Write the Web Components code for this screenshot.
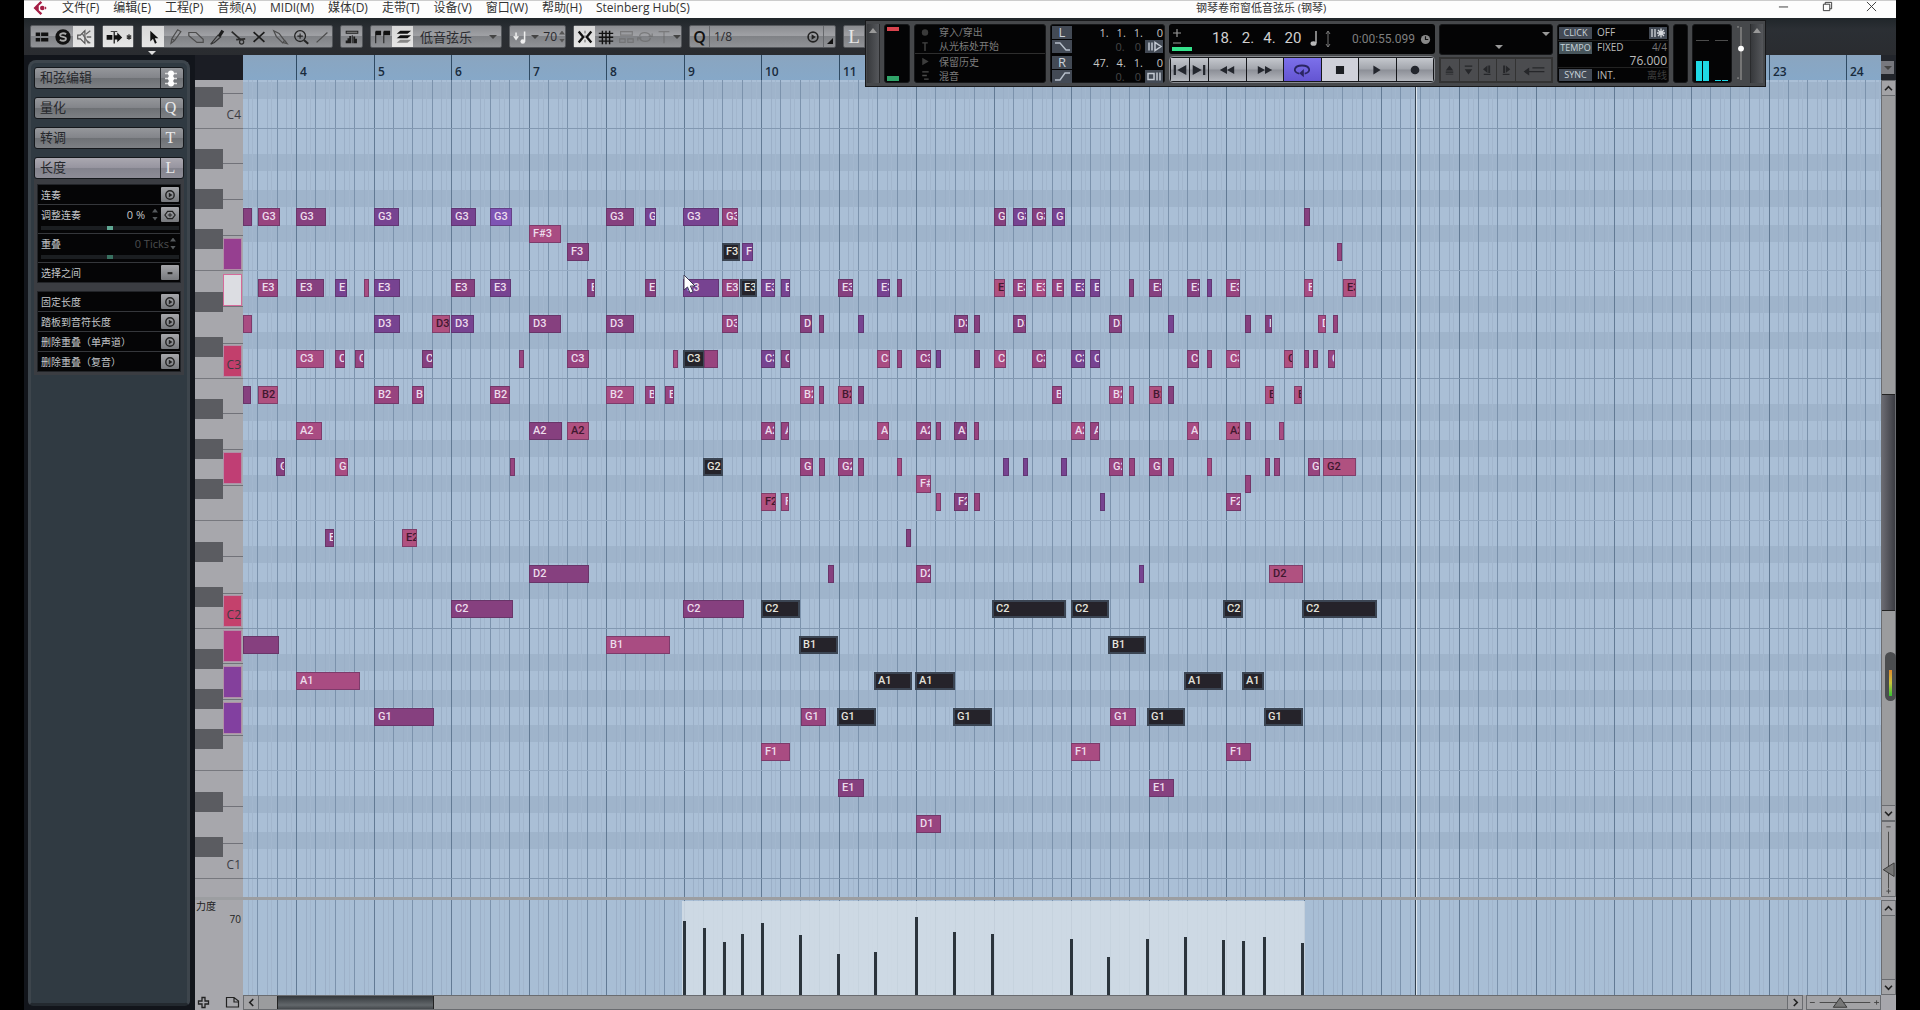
<!DOCTYPE html>
<html lang="zh-CN">
<head>
<meta charset="utf-8">
<title>钢琴卷帘窗</title>
<style>
html,body{margin:0;height:100%;background:#000;overflow:hidden}
body{font-family:"Open Sans","Noto Sans CJK SC",sans-serif;font-size:12px}
</style>
</head>
<body>
<key-editor></key-editor>
<script>
const BASE = `*{box-sizing:border-box}button,input,select{font:inherit;color:inherit;margin:0;padding:0;border:0;background:none;border-radius:0;outline:0}svg{display:block}`;
const define = (name, css, html) => customElements.define(name, class extends HTMLElement {
  constructor() { super(); this.attachShadow({mode: 'open'}); }
  connectedCallback() {
    if (this.shadowRoot.firstChild) return;
    this.shadowRoot.innerHTML = `<style>${BASE}${css}</style>` + (typeof html === 'function' ? html(this) : html);
  }
});

/* ---------- icons ---------- */
const ICONS = {
  layout: ['0 0 20 20', '<path d="M3 5h5v4H3zM3 11h5v4H3zM9 5h8v4H9zM9 11h8v4H9z" fill="#111"/>'],
  solo: ['0 0 20 20', '<circle cx="10" cy="10" r="8.5" fill="#111"/><path d="M13.500 7C11 5 6.500 5.800 6.800 8.200 7.200 10.500 13.300 9.500 13.300 12 13.200 14.600 9 14.800 6.500 13" fill="none" stroke="#aaa" stroke-width="2"/>'],
  feedback: ['0 0 20 20', '<path d="M3 8h3l5-5v14l-5-5H3z" fill="none" stroke="#555" stroke-width="1.300"/><path d="M12 7l5-4M13 10h5M12 13l5 4M8 6l7 11" stroke="#666" stroke-width="1.400"/>'],
  autoscroll: ['0 0 22 20', '<path d="M2 7.500h7v6H2zM12 8h3V4.500l6 6-6 6V13h-3zM10.500 3h1.500v15h-1.500zM7 3h8v1H7z" fill="#111"/>'],
  star: ['0 0 8 20', '<path d="M4 7v6M1.500 8.500l5 3M6.500 8.500l-5 3" stroke="#333" stroke-width="1.400"/>'],
  arrow: ['0 0 20 20', '<path d="M7 3v12l3-3 2.200 5.500 2-1-2.200-5h4z" fill="#111"/>'],
  pencil: ['0 0 20 20', '<path d="M5.500 17l1-5 6.500-10 3.500 2-7 10zM6.500 12l3 2" fill="none" stroke="#4c4c4c" stroke-width="1.300"/>'],
  eraser: ['0 0 20 20', '<path d="M2 5h8l8 7.500V16h-7L2 8.500z" fill="none" stroke="#4c4c4c" stroke-width="1.300"/>'],
  trim: ['0 0 20 20', '<path d="M3 18l8-10 3 2-7 6z" fill="none" stroke="#333" stroke-width="1.300"/><path d="M11 8l4-6 3 2-4 6z" fill="#1c1c1c"/>'],
  scissors: ['0 0 20 20', '<path d="M3 4l10 9M8 13l10-1" stroke="#2c2c2c" stroke-width="1.900"/><circle cx="14" cy="15.500" r="2.300" fill="none" stroke="#2c2c2c" stroke-width="1.400"/>'],
  mute: ['0 0 20 20', '<path d="M4 4.500l12 11M16 4.500l-12 11" stroke="#1c1c1c" stroke-width="1.900"/>'],
  glue: ['0 0 20 20', '<path d="M3 3l6 3 6 8-2 2.500-7-7zM13 16l5 1.500-3-4" fill="none" stroke="#4c4c4c" stroke-width="1.300"/>'],
  zoom: ['0 0 20 20', '<circle cx="9" cy="9" r="6" fill="none" stroke="#222" stroke-width="1.400"/><path d="M13.500 13.500l4.500 4" stroke="#222" stroke-width="2.200"/><path d="M6 9h6M9 6v6" stroke="#222" stroke-width="1.200"/>'],
  line: ['0 0 20 20', '<path d="M4 16L16 5" stroke="#4c4c4c" stroke-width="1.400"/>'],
  velocity: ['0 0 20 20', '<path d="M3 3h14v3.500H3zM3 17v-3h2v-2.500h2V9h2v8h.800V8h1v9h.700V9.500h2V12h2v5z" fill="#1c1c1c"/><path d="M4 4.700h12" stroke="#999"/>'],
  edit: ['0 0 20 20', '<path d="M3 17V4M12 17V4" stroke="#222" stroke-width="1.200"/><path d="M3 3h6v5H3zM12 3h7v5h-7z" fill="#111"/>'],
  layers: ['0 0 20 20', '<path d="M7 3h12l-4 3.500H3zM7 8h12l-4 3.500H3z" fill="#111"/><path d="M7 13h12l-4 3.500H3z" fill="#888"/>'],
  insertNote: ['0 0 20 20', '<path d="M4.500 5v7M2 9l2.500 3.500L7 9M14 4v11" stroke="#eee" stroke-width="1.700" fill="none"/><circle cx="12" cy="15" r="2.600" fill="#eee"/>'],
  snap: ['0 0 20 20', '<path d="M3 4l5 6-5 6M17 4l-5 6 5 6" fill="none" stroke="#111" stroke-width="2.600"/><path d="M10 3v14" stroke="#555" stroke-dasharray="3 2"/>'],
  grid: ['0 0 20 20', '<path d="M2 6h16M2 10.300h16M2 14.600h16M6 3v15M10 3v15M14 3v15" stroke="#111" stroke-width="1.600"/>'],
  gridType: ['0 0 20 20', '<path d="M4 4h13v4H4zM3 12h6v4H3zM12 12h6v4h-6z" fill="none" stroke="#666" stroke-width="1.300"/>'],
  loop: ['0 0 20 20', '<path d="M4 9c1-5 10-5 12 0M16 11c-1 5-10 5-12 0M14 9h4V6M6 11H2v3" fill="none" stroke="#666" stroke-width="1.400"/>'],
  tee: ['0 0 20 20', '<path d="M4 4h12M10 4v13" stroke="#666" stroke-width="1.300"/>'],
  play: ['0 0 20 20', '<circle cx="10" cy="10" r="7" fill="none" stroke="#222" stroke-width="2.300"/><path d="M8 6l6 4-6 4z" fill="#222"/>'],
  dot: ['0 0 20 20', '<rect x="6" y="8.500" width="8" height="3.500" fill="#222"/>'],
  gem: ['0 0 20 20', '<path d="M1.500 10L6 4h8l4.500 6L14 16H6z" fill="none" stroke="#222" stroke-width="2"/><path d="M10 6.500v7M6.500 10h7" stroke="#222" stroke-width="1.600"/>'],
  chord: ['0 0 14 20', '<path d="M1 5.500h12M1 10.500h12M1 15.500h12" stroke="#ddd" stroke-width="1.400"/><g fill="#fff"><circle cx="7" cy="5.500" r="3"/><circle cx="7" cy="10.500" r="3"/><circle cx="7" cy="15.500" r="3"/></g>'],
  toStart: ['0 0 20 20', '<path d="M3 4.500h2.500v11H3zM17 4.500v11L7 10z" fill="#23262d"/>'],
  toEnd: ['0 0 20 20', '<path d="M14.500 4.500H17v11h-2.500zM3 4.500v11L13 10z" fill="#23262d"/>'],
  rewind: ['0 0 20 20', '<path d="M10 5.500v9L2 10zM18 5.500v9L10 10z" fill="#23262d"/>'],
  forward: ['0 0 20 20', '<path d="M10 5.500v9l8-4.500zM2 5.500v9l8-4.500z" fill="#23262d"/>'],
  cycle: ['0 0 20 20', '<path d="M7 14C-1 12.500 1 5 10 5s11 7.500 3 9" fill="none" stroke="#2a2563" stroke-width="2"/><path d="M12 9v9l-5-4.500z" fill="#2a2563"/>'],
  stop: ['0 0 20 20', '<path d="M5.500 5.500h9v9h-9z" fill="#1d1f24"/>'],
  playT: ['0 0 20 20', '<path d="M6 5v10l8-5z" fill="#23262d"/>'],
  rec: ['0 0 20 20', '<circle cx="10" cy="10" r="4.800" fill="#23262d"/>'],
  nUp: ['0 0 20 20', '<path d="M10 4l5 6.500H5zM5 12h10v1.500H5zM5 15h10v1H5z" fill="#26272a"/>'],
  nDown: ['0 0 20 20', '<path d="M10 16l5-7H5zM5 4h10v1.500H5z" fill="#26272a"/>'],
  nLeft: ['0 0 20 20', '<path d="M4 9l6-5v10zM11 4h2.500v10H11zM5 15h9v1.500H5z" fill="#26272a"/>'],
  nRight: ['0 0 20 20', '<path d="M15 9L9 4v10zM5.500 4H8v10H5.500zM5 15h9v1.500H5z" fill="#26272a"/>'],
  nEnter: ['0 0 28 20', '<path d="M1 12l7-5v10zM8 11.200h19v1.700H8zM12 6.500h15v1.700H12z" fill="#26272a"/>'],
  chevUp: ['0 0 15 15', '<path d="M3.500 9.500l4-4 4 4" fill="none" stroke="#222" stroke-width="1.900"/>'],
  chevDown: ['0 0 15 15', '<path d="M3.500 5.500l4 4 4-4" fill="none" stroke="#222" stroke-width="1.900"/>'],
  chevLeft: ['0 0 15 15', '<path d="M9.500 3.500l-4 4 4 4" fill="none" stroke="#222" stroke-width="1.900"/>'],
  chevRight: ['0 0 15 15', '<path d="M5.500 3.500l4 4-4 4" fill="none" stroke="#222" stroke-width="1.900"/>'],
  plus: ['0 0 15 15', '<path d="M6 2.500h3V6h3.500v3H9v3.500H6V9H2.500V6H6z" fill="none" stroke="#222" stroke-width="1.300"/>'],
  page: ['0 0 15 15', '<path d="M1.500 2.500H9l4.500 3.500v6h-12zM9 2.500V7h4" fill="none" stroke="#222" stroke-width="1.200"/>'],
  min: ['0 0 12 12', '<path d="M1 6.500h10" stroke="#333"/>'],
  restore: ['0 0 12 12', '<path d="M1.500 3.500h7v7h-7zM3.500 3.500v-2h7v7h-2" fill="none" stroke="#333"/>'],
  close: ['0 0 12 12', '<path d="M1 1l10 10M11 1L1 11" stroke="#333"/>'],
  logo: ['0 0 16 16', '<path d="M8 0L0 8l8 8 2-2-4-3.500v-5L10 2z" fill="#a51e45"/><circle cx="10" cy="8" r="2.600" fill="#a51e45"/><path d="M13 6l2 2-2 2z" fill="#a51e45"/>'],
  inL: ['0 0 20 13', '<path d="M3 3h5l6 7h4" fill="none" stroke="#b7bfca" stroke-width="1.400"/>'],
  inR: ['0 0 20 13', '<path d="M3 10h5l5-7h5" fill="none" stroke="#b7bfca" stroke-width="1.400"/>'],
  preroll: ['0 0 18 13', '<path d="M4 2.500v8M7 2.500v8M10 2.500v8l6-4z" fill="none" stroke="#c3c9d2" stroke-width="1.500"/>'],
  postroll: ['0 0 18 13', '<path d="M3 3.500h6v6H3zM12 2.500v8M15 2.500v8" fill="none" stroke="#c3c9d2" stroke-width="1.500"/>'],
  clickIc: ['0 0 18 12', '<path d="M3 2v8M6 2v8M12 1.500v9M8 6h8M9 3l6 6M15 3L9 9" stroke="#d5d8dd" stroke-width="1.300"/>'],
  punch: ['0 0 10 12', '<circle cx="5" cy="6" r="3.500" fill="#3a3a3a"/>'],
  fromCursor: ['0 0 10 12', '<path d="M2 2h6M5 2v9" stroke="#444" stroke-width="1.500"/>'],
  history: ['0 0 10 12', '<path d="M2 2v8l7-4z" fill="#3c3c3c"/>'],
  mix: ['0 0 10 12', '<path d="M2 2h7M2 6h5M4 10h5" stroke="#4c4c4c" stroke-width="1.500"/>'],
  quarter: ['0 0 10 20', '<path d="M8 3v12" stroke="#b8b8b8" stroke-width="1.400"/><ellipse cx="5.500" cy="15.500" rx="3" ry="2.300" fill="#b8b8b8"/>'],
  range: ['0 0 6 20', '<path d="M3 2v16M1 5l2-3 2 3M1 15l2 3 2-3" stroke="#777" fill="none"/>'],
  clock: ['0 0 12 12', '<circle cx="6" cy="6" r="5" fill="#888"/><path d="M6 2.500V6h3" stroke="#111" fill="none" stroke-width="1.300"/>'],
  nudge: ['0 0 20 28', '<path d="M1 8h8M5 4v8M1 18h8" stroke="#999" stroke-width="1.200"/><path d="M0 22h20v4H0z" fill="#35e28c"/>'],
  pointer: ['0 0 14 20', '<path d="M1 1v15l3.500-3 2.500 6 3-1.200-2.600-5.800H12z" fill="#fff" stroke="#3a3a55" stroke-width="1"/>']
};
define('ui-icon', ':host{display:block;flex:none;width:20px;height:20px}svg{width:100%;height:100%}',
  el => { const [vb, body] = ICONS[el.getAttribute('name')]; return `<svg viewBox="${vb}" aria-hidden="true">${body}</svg>`; });

define('small-arrow', `:host{display:block;flex:none;border:4px solid transparent;border-bottom-width:0;border-top-color:var(--c,#444);width:0;height:0}
  :host([up]){border-bottom-width:5px;border-top-width:0;border-bottom-color:var(--c,#444)}`, '');

define('spin-arrows', `:host{display:flex;flex-direction:column;gap:4px;flex:none}
  i{width:6px;height:4px;background:var(--c,#555)}.u{clip-path:polygon(50% 0,100% 100%,0 100%)}.d{clip-path:polygon(0 0,100% 0,50% 100%)}`, '<i class="u"></i><i class="d"></i>');

/* ---------- menu bar ---------- */
define('menu-bar', `:host{display:flex;align-items:flex-start;height:18px;background:#fdfdfd;border-top:1px solid #ccc;color:#333;font-size:12px;line-height:14px;position:relative}
  nav{display:flex;gap:14px;padding-left:14px}button{line-height:14px;white-space:nowrap}
  ui-icon.logo{width:15px;height:14px;margin-left:9px}
  h1{position:absolute;left:1172px;top:-1px;margin:0;font-weight:400;font-size:11px;line-height:16px;white-space:nowrap}
  .win{margin-left:auto;display:flex;gap:33px;padding-right:19px}.win ui-icon{width:11px;height:11px}`,
  `<ui-icon class="logo" name="logo"></ui-icon><nav>${['文件(F)','编辑(E)','工程(P)','音频(A)','MIDI(M)','媒体(D)','走带(T)','设备(V)','窗口(W)','帮助(H)','Steinberg Hub(S)'].map(t => `<button>${t}</button>`).join('')}</nav>
  <h1>钢琴卷帘窗低音弦乐 (钢琴)</h1>
  <div class="win"><button aria-label="最小化"><ui-icon name="min"></ui-icon></button><button aria-label="还原"><ui-icon name="restore"></ui-icon></button><button aria-label="关闭"><ui-icon name="close"></ui-icon></button></div>`);

/* ---------- tool bar ---------- */
define('tool-group', `:host{display:flex;align-items:stretch;height:23px;background:linear-gradient(#8a8c90,#a0a1a5 45%,#808286 50%,#909296);border:1px solid #55585c;border-radius:2px;color:#2a2a2e;flex:none;position:relative}`, '<slot></slot>');
define('tool-button', `:host{display:flex}button{display:flex;align-items:center;justify-content:center;width:var(--w,21px);height:21px}
  ui-icon{width:var(--iw,18px);height:18px}:host([on]) button{background:linear-gradient(#d8d8d8,#e6e6e6)}`,
  el => `<button aria-label="${el.getAttribute('icon')}"><ui-icon name="${el.getAttribute('icon')}"></ui-icon></button>`);

const tb = (icon, on = '') => `<tool-button icon="${icon}" ${on}></tool-button>`;
define('tool-bar', `:host{display:flex;align-items:flex-start;gap:7px;height:37px;padding:7px 0 0 6px;background:linear-gradient(#20262a,#2b2f34 30%,#2a2c30);overflow:hidden}
  select{appearance:none;font-size:13px;line-height:20px;padding-left:7px}
  .pick{display:flex;align-items:center}
  .pick.name{padding-right:4px}.pick.name select{width:76px}.pick.q select{width:93px;font-size:12px;padding-left:4px}
  .len{display:flex;align-items:center;gap:2px;padding-right:2px}input{width:16px;font-size:12px;text-align:right}
  .mid{align-self:center}.faint{opacity:.6}.cell{display:flex;align-items:center;border-right:1px solid #66686c}
  .qq{width:20px;font-size:16px;font-weight:600;justify-content:center;color:#111}
  .corner{width:11px;position:relative}.corner:after{content:"";position:absolute;right:2px;bottom:3px;border:3px solid transparent;border-right-color:#111;border-bottom-color:#111}
  .L{font-family:"Liberation Serif",serif;font-size:19px;color:#e6e6e6;width:21px;justify-content:center}
  .mark{position:absolute;left:6px;top:25px;--c:#ddd}`,
  `<tool-group>${tb('layout')}${tb('solo')}${tb('feedback','on')}</tool-group>
  <tool-group>${tb('autoscroll','on')}<tool-button icon="star" on style="--w:9px;--iw:8px"></tool-button></tool-group>
  <tool-group>${tb('arrow','on style="--w:22px"')}${['pencil','eraser','trim','scissors','mute','glue','zoom','line'].map(n => tb(n)).join('')}<small-arrow class="mark"></small-arrow></tool-group>
  <tool-group>${tb('velocity')}</tool-group>
  <tool-group>${tb('edit')}${tb('layers','on')}<span class="pick name"><select aria-label="片段"><option>低音弦乐</option></select><small-arrow></small-arrow></span></tool-group>
  <tool-group>${tb('insertNote')}<span class="len"><small-arrow></small-arrow><input aria-label="插入力度" value="70"></span><spin-arrows class="mid"></spin-arrows></tool-group>
  <tool-group>${tb('snap','on')}${tb('grid')}${['gridType','loop','tee'].map(n => `<tool-button class="faint" icon="${n}" style="--w:19px"></tool-button>`).join('')}<small-arrow class="mid"></small-arrow></tool-group>
  <tool-group><span class="cell qq">Q</span><span class="pick q"><select aria-label="量化"><option>1/8</option></select></span><tool-button class="cell" icon="play" style="--w:20px;--iw:14px"></tool-button><span class="corner"></span></tool-group>
  <tool-group><span class="cell L">L</span>${tb('tee')}</tool-group>`);

/* ---------- inspector ---------- */
define('section-head', `:host{display:block}button{display:flex;width:100%;height:22px;align-items:stretch;text-align:left;border:1px solid #15181c;border-radius:3px;background:linear-gradient(#95979b,#83858a 48%,#6e7175 52%,#7d8084);color:#26282c;font-size:13px;line-height:18px}
  :host([open]) button{background:linear-gradient(#aaa8b0,#9795a0 48%,#83838d 52%,#8d8c96)}
  span{flex:1;padding-left:5px}b{width:23px;border-left:1px solid #2b2d31;font:16px/20px "Liberation Serif",serif;color:#e9e9e9;display:flex;justify-content:center;padding-right:3px}
  ui-icon{width:14px;height:20px}`,
  el => `<button><span>${el.getAttribute('label')}</span><b>${el.hasAttribute('icon') ? '<ui-icon name="chord"></ui-icon>' : el.getAttribute('mark')}</b></button>`);

define('function-row', `:host{display:block;background:#050506;color:#c4c7ca;font-size:10px;line-height:14px;height:19px;padding:1px 1px 0 3px}
  :host([slider]){height:28px}
  .r{display:flex;align-items:center;height:17px}.r label,.r span{flex:1;white-space:nowrap}
  button{width:18px;height:15px;background:linear-gradient(#a5a6aa,#77797d);border-radius:1px;display:flex;align-items:center;justify-content:center}
  ui-icon{width:12px;height:12px}output{font-size:11px;margin-right:7px}:host([dim]) output{color:#4c4e50;margin-right:1px}
  spin-arrows{margin-right:3px;--c:#55595c}
  input{appearance:none;display:block;width:100%;height:6px;margin-top:2px;background:linear-gradient(transparent 1px,#1b1e21 1px,#1b1e21 5px,transparent 5px)}
  input::-webkit-slider-thumb{appearance:none;width:6px;height:4px;background:#5fa893}:host([dim]) input::-webkit-slider-thumb{background:#38705f}`,
  el => { const a = n => el.getAttribute(n); return `<div class="r">${el.hasAttribute('slider') ? `<label for="s">${a('label')}</label>` : `<span>${a('label')}</span>`}${a('value') ? `<output>${a('value')}</output><spin-arrows></spin-arrows>` : ''}${a('icon') ? `<button aria-label="${a('label')}"><ui-icon name="${a('icon')}"></ui-icon></button>` : ''}</div>${el.hasAttribute('slider') ? '<input id="s" type="range">' : ''}`; });

define('inspector-panel', `:host{display:block;width:171px;flex:none;background:#12151b;padding:5px 5px 4px 4px}
  .p{height:100%;background:#303a42;border:3px solid #3d454c;border-bottom-color:#23292f;border-radius:8px 8px 5px 5px;padding:4px 3px}
  .heads{display:grid;gap:8px}.rows{display:grid;gap:1px;margin:0 3px;border:1px solid #222428;background:#35373b}
  .body{background:#3b3d42;padding:5px 0 3px}.rows+.rows{margin-top:8px}`,
  `<div class="p"><div class="heads"><section-head label="和弦编辑" icon></section-head><section-head label="量化" mark="Q"></section-head><section-head label="转调" mark="T"></section-head><section-head label="长度" mark="L" open></section-head></div>
  <div class="body"><div class="rows"><function-row label="连奏" icon="play"></function-row><function-row label="调整连奏" value="0 %" slider icon="gem"></function-row><function-row label="重叠" value="0 Ticks" slider dim></function-row><function-row label="选择之间" icon="dot"></function-row></div>
  <div class="rows"><function-row label="固定长度" icon="play"></function-row><function-row label="踏板到音符长度" icon="play"></function-row><function-row label="删除重叠（单声道）" icon="play"></function-row><function-row label="删除重叠（复音）" icon="play"></function-row></div></div></div>`);

/* ---------- musical geometry ---------- */
const BAR = 77.5, BAR4 = 53, OCT = 250, OCT3_TOP = 48;
const ROW = {B:8,'A#':26,A:44,'G#':62,G:80,'F#':97,F:115,E:151,'D#':168,D:187,'C#':204,C:222};
const rowY = p => OCT3_TOP + (3 - +p.slice(-1)) * OCT + ROW[p.slice(0, -1)];
const beatLines = h => {
  let s = '';
  for (let i = -6; i < 400; i++) {
    const x = Math.round(BAR4 + i * BAR / 8) + .5, kind = i % 8 === 0 ? '#627a94' : i % 2 === 0 ? '#7b92ac' : '#9bafc7';
    s += `<path d="M${x} 0V${h}" stroke="${kind}"/>`;
    if (i % 2 === 0) s += `<path d="M${x + 14} 0V${h}" stroke="#a2b6cd"/>`;
  }
  return s;
};

define('time-ruler', `:host{display:block;position:relative;background:linear-gradient(#8aa5c0,#86a8c8);overflow:hidden}svg{width:100%;height:100%}text{font:600 12px "Open Sans",sans-serif;fill:#182a3c}`,
  () => { let s = ''; for (let n = 4; n < 50; n++) s += `<path d="M${Math.round(BAR4 + (n - 4) * BAR) + .5} 0V25" stroke="#2f4a63"/>`;
    for (const n of [4,5,6,7,8,9,10,11,23,24]) s += `<text x="${Math.round(BAR4 + (n - 4) * BAR) + 4}" y="21">${n}</text>`;
    return `<svg>${s}</svg>`; });

define('piano-keys', `:host{display:block;background:#a7a7ac;overflow:hidden}svg{width:100%;height:100%}text{font:12px "Open Sans",sans-serif;fill:#3c3c44;text-anchor:end}`,
  () => {
    let s = '';
    const tops = {B:2,A:38,G:74,F:110,E:146,D:181,C:217};
    for (const [p, c] of [['F3','#963f90'],['E3','#dcdde2'],['C3','#c23f6c'],['G2','#c03e74'],['C2','#c4416c'],['B1','#b03c80'],['A1','#84409c'],['G1','#8240a0']]) {
      const y = OCT3_TOP + (3 - p[1]) * OCT + tops[p[0]];
      s += `<rect x="28.500" y="${y + .5}" width="18" height="31" fill="${c}" stroke="${p === 'E3' ? '#d46a9a' : '#b08fa6'}"/>`;
    }
    for (let o = 4; o >= 0; o--) {
      const T = OCT3_TOP + (3 - o) * OCT;
      for (const d of [35,71,107,178,215]) s += `<path d="M27 ${T + d}.5h21" stroke="#717279"/>`;
      for (const d of [0,142]) s += `<path d="M0 ${T + d}.5h48" stroke="#77787e"/>`;
      for (const d of [21,61,101,164,209]) s += `<rect y="${T + d}" width="28" height="20" fill="#5b5c61"/>`;
      if (o) s += `<text x="46" y="${T + 241}">C${o}</text>`;
    }
    return `<svg>${s}</svg>`;
  });

define('midi-note', `:host{position:absolute;height:18px;overflow:hidden;border:1px solid rgba(70,40,80,.45);padding-left:3px;font:500 11px/16px Roboto,sans-serif;white-space:nowrap;color:#ecdcec;background:#86407f}
  :host([tone=v]){background:#774391}:host([tone=l]){background:#7e54b4}:host([tone=m]){background:#98447f}:host([tone=k]){background:#a94c82}
  :host([tone=d]){background:#b05180;color:#40182f}
  :host([tone=s]){background:#25232a;border:2px solid #3b4553;color:#e4e2dc;line-height:14px;padding-left:2px}`, '<slot></slot>');

/* start, end and tone of every note, by pitch */
const NOTES = {
 G3:'243 252 p,258 280 m,296 326 p,374 399 v,451 476 v,490 512 l,606 634 p,645 656 v,683 719 v,722 738 m,994 1006 p,1013 1027 v,1032 1046 p,1052 1065 v,1304 1310 p',
 'F#3':'529 561 k', F3:'567 589 p,722 740 s,742 753 v,1337 1342 m',
 E3:'258 278 m,296 324 p,335 347 v,364 368 k,374 400 v,451 475 p,490 511 v,587 595 p,645 656 p,683 719 v,722 739 m,740 757 s,761 775 v,781 790 v,838 853 p,877 890 v,897 901 p,994 1005 d,1013 1026 m,1032 1046 k,1052 1064 m,1071 1085 v,1090 1100 v,1129 1134 p,1149 1162 p,1187 1200 p,1207 1210 v,1226 1240 m,1304 1313 k,1343 1356 d',
 D3:'243 252 k,374 400 v,432 450 d,451 474 v,529 561 p,606 634 p,722 738 m,800 812 p,819 824 p,858 864 v,954 968 p,974 980 p,1013 1026 p,1109 1122 p,1168 1174 v,1245 1251 p,1265 1272 p,1318 1326 k,1333 1337 m',
 C3:'296 324 k,335 345 m,355 364 m,422 433 p,519 524 m,567 589 m,673 677 k,683 705 s,704 718 m,761 775 v,781 790 p,877 890 k,897 901 m,916 931 m,936 941 v,974 980 p,994 1006 k,1032 1046 m,1071 1085 v,1090 1100 v,1187 1199 m,1207 1211 m,1226 1240 k,1284 1293 d,1304 1308 m,1313 1316 m,1328 1335 m',
 B2:'243 251 p,258 278 d,374 399 m,412 424 m,490 510 m,606 634 k,645 655 m,665 674 m,800 814 k,819 824 m,838 852 d,858 864 p,1052 1062 m,1109 1123 k,1129 1134 k,1149 1162 d,1168 1174 p,1265 1274 d,1294 1302 d',
 A2:'296 322 k,529 562 p,567 589 d,761 775 m,781 789 m,877 889 k,916 931 m,936 941 m,954 967 p,974 979 m,1071 1085 k,1090 1099 m,1187 1199 k,1226 1240 d,1245 1251 m,1279 1284 k',
 G2:'276 285 p,335 348 k,510 514 m,703 723 s,800 813 m,819 825 m,838 853 m,858 864 m,897 901 k,1003 1009 v,1023 1028 v,1061 1067 v,1109 1123 m,1129 1135 m,1149 1162 m,1168 1174 m,1207 1211 k,1265 1269 m,1274 1280 m,1308 1320 m,1323 1356 d',
 'F#2':'916 931 k,1245 1251 m', F2:'761 776 d,781 789 k,936 940 k,954 968 p,974 980 m,1100 1105 v,1226 1241 m',
 E2:'325 334 p,402 417 d,906 911 p', D2:'529 589 p,828 834 p,916 931 m,1139 1144 v,1269 1303 d',
 C2:'451 513 p,683 744 p,761 800 s,992 1066 s,1071 1109 s,1223 1243 s,1302 1377 s',
 B1:'243 279 p,606 670 k,799 838 s,1108 1146 s', A1:'296 360 k,874 912 s,915 955 s,1184 1223 s,1242 1264 s',
 G1:'374 434 p,801 826 m,837 876 s,953 992 s,1110 1136 m,1147 1185 s,1264 1303 s',
 F1:'761 790 k,1071 1100 k,1226 1251 m', E1:'838 864 p,1149 1174 p', D1:'916 941 m'
};
const LEFT = 243;
/* short notes carry only the pitch letter, the shortest none */
const noteLabel = (pitch, start, width) => start === LEFT || start === 704 || width < 7 ? '' : width < 13 ? pitch[0] : pitch;
define('note-grid', `:host{display:block;position:relative;overflow:hidden;background:#aabfd6}svg.g{position:absolute;width:100%;height:100%}
  .play{position:absolute;top:0;bottom:0;left:1172px;width:2px;background:#33414f;border-right:1px solid #dfe7ee}
  ui-icon{position:absolute;left:440px;top:194px;width:14px;height:20px}`,
  () => {
    let g = '', n = '';
    for (let o = 4; o >= 0; o--) {
      const T = OCT3_TOP + (3 - o) * OCT;
      for (const k of ['A#','G#','F#','D#','C#']) g += `<rect y="${T + ROW[k]}" width="100%" height="17" fill="#9fb4cb"/>`;
    }
    g += beatLines(2000);
    for (let o = 4; o >= 0; o--) {
      const T = OCT3_TOP + (3 - o) * OCT;
      g += `<path d="M0 ${T}.5h4000" stroke="#8298b1"/><path d="M0 ${T + 142}.5h4000" stroke="#96abc3"/>`;
    }
    for (const [p, list] of Object.entries(NOTES)) for (const item of list.split(',')) {
      const [a, b, t] = item.split(' ');
      n += `<midi-note tone="${t}" style="left:${a - LEFT}px;width:${b - a}px;top:${rowY(p)}px">${noteLabel(p, +a, b - a)}</midi-note>`;
    }
    return `<svg class="g">${g}</svg>${n}<div class="play"></div><ui-icon name="pointer"></ui-icon>`;
  });

const VEL = [[683,74],[703,67],[723,53],[741,61],[761,72],[799,60],[837,41],[874,43],[915,78],[953,63],[991,61],[1070,56],[1107,38],[1146,56],[1184,58],[1222,55],[1242,54],[1263,58],[1301,52]];
define('velocity-lane', `:host{display:block;position:relative;overflow:hidden;background:#a8bed5}svg{width:100%;height:100%}
  .play{position:absolute;top:0;bottom:0;left:1172px;width:2px;background:#33414f;border-right:1px solid #dfe7ee}`,
  () => `<svg>${beatLines(95)}<rect x="439" y="1" width="623" height="94" fill="#d3dde6" fill-opacity=".86"/>${VEL.map(([x, h]) => `<rect x="${x - LEFT}" y="${95 - h}" width="3" height="${h}" fill="#2b343c"/>`).join('')}</svg><div class="play"></div>`);

/* ---------- scroll bars ---------- */
define('scroll-bar', `:host{display:flex;background:#9b9c9e;border:1px solid #6a6c70}:host([vertical]){flex-direction:column}
  button{flex:none;width:15px;height:13px;background:#a3a3a6;border-right:1px solid #6a6c70;display:flex;justify-content:center;align-items:center}
  button:last-child{border-right:0;border-left:1px solid #6a6c70}
  :host([vertical]) button{width:13px;height:15px;border:0;border-bottom:1px solid #6a6c70}:host([vertical]) button:last-child{border:0;border-top:1px solid #6a6c70}
  ui-icon{width:13px;height:13px}.thumb{background:linear-gradient(#34383c,#62676b 70%,#44484c);border:solid #222;border-width:0 1px}
  :host([vertical]) .thumb{background:linear-gradient(90deg,#6b6b72,#3b3c42);border-width:1px 0}`,
  el => { const v = el.hasAttribute('vertical'), [a, b, c] = (el.getAttribute('parts') || '1 0 0').split(' ');
    return `<button aria-label="后退"><ui-icon name="chev${v ? 'Up' : 'Left'}"></ui-icon></button><div style="flex:${a} 1 0"></div>${+b ? `<div class="thumb" style="flex:${b} 1 0"></div>` : ''}<div style="flex:${c} 1 0"></div><button aria-label="前进"><ui-icon name="chev${v ? 'Down' : 'Right'}"></ui-icon></button>`; });

define('zoom-slider', `:host{display:block;background:#a3a3a6;border:1px solid #6a6c70}svg{width:100%;height:100%}`,
  el => el.hasAttribute('vertical')
    ? '<svg viewBox="0 0 15 76" preserveAspectRatio="none" role="img" aria-label="垂直缩放"><path d="M5 5h5M7.500 10v58M5 71h5M7.500 68.500v5" stroke="#444"/><path d="M1.500 49L14 42v14z" fill="#777" stroke="#333"/></svg>'
    : '<svg viewBox="0 0 75 15" preserveAspectRatio="none" role="img" aria-label="水平缩放"><path d="M3 7.500h5M13 7.500h52M69 7.500h5M71.500 5v5" stroke="#444"/><path d="M34 2l7 11H27z" fill="#777" stroke="#333"/></svg>');

/* ---------- transport ---------- */
define('black-box', ':host{display:block;background:#040405;border-radius:3px;border:1px solid #161719}', '<slot></slot>');
define('level-meter', `:host{display:flex;gap:1px;align-items:flex-end}i{flex:1}`,
  el => el.getAttribute('levels').split(' ').map(h => `<i style="height:${h}px;background:#1fd9e6"></i>`).join(''));
define('mode-list', `:host{display:grid;grid-template-rows:14px 14px 16px 13px;font-size:10px;line-height:14px;color:#7c7c7c}
  div{display:flex;align-items:center;gap:9px;padding-left:5px;white-space:nowrap}div:nth-of-type(3){border-top:1px solid #2e2e2e}ui-icon{width:10px;height:11px}`,
  [['punch','穿入/穿出'],['fromCursor','从光标处开始'],['history','保留历史'],['mix','混音']].map(([i, t]) => `<div><ui-icon name="${i}"></ui-icon><span>${t}</span></div>`).join(''));
define('locator-box', `:host{display:grid;grid-template-columns:20px 1fr;grid-template-rows:14px 16px 14px 13px;padding:1px 1px 0 1px;font-size:11px;color:#c6c6c6}
  .k{background:#434a55;color:#ccd2d9;font-size:13px;line-height:13px;text-align:center;height:13px}
  .v{display:flex;justify-content:flex-end;gap:8px;line-height:14px;white-space:pre}.d{color:#454545;gap:10px}
  .v button{background:#434a55;width:18px;height:13px;margin-left:-6px}.k ui-icon{width:20px;height:13px}.v ui-icon{width:18px;height:13px}`,
  `<button class="k">L</button><div class="v"><span>1.</span><span>1.</span><span>1.</span><span>  0</span></div>
  <button class="k" aria-label="淡入"><ui-icon name="inL"></ui-icon></button><div class="v d"><span>0.</span><span>0</span><button aria-label="预卷"><ui-icon name="preroll"></ui-icon></button></div>
  <button class="k">R</button><div class="v"><span>47.</span><span>4.</span><span>1.</span><span>  0</span></div>
  <button class="k" aria-label="淡出"><ui-icon name="inR"></ui-icon></button><div class="v d"><span>0.</span><span>0</span><button aria-label="后卷"><ui-icon name="postroll"></ui-icon></button></div>`);
define('time-display', `:host{display:flex;align-items:center;height:31px;background:#040405;border-radius:3px;color:#d0d0d0;padding:0 4px 0 3px;font-family:Roboto,sans-serif}
  .pm{width:20px;height:28px}
  .pos{display:flex;font-size:15px;line-height:24px;gap:9px;margin-left:20px;padding-bottom:3px;white-space:nowrap}
  .qn{width:10px;height:20px;margin:0 0 2px 7px}.rg{width:6px;height:20px;margin-left:7px}
  .clock{margin-left:auto;font-size:12px;color:#7f7f7f;margin-right:5px}.ck{width:11px;height:11px}`,
  `<ui-icon class="pm" name="nudge"></ui-icon><div class="pos"><span>18.</span><span>2.</span><span>4.</span><span>20</span></div><ui-icon class="qn" name="quarter"></ui-icon><ui-icon class="rg" name="range"></ui-icon><span class="clock">0:00:55.099</span><ui-icon class="ck" name="clock"></ui-icon>`);
define('transport-keys', `:host{display:flex;height:27px;border:1px solid #888b90;border-radius:4px;padding:1px;gap:1px;background:#15161a;overflow:hidden}
  button{flex:37 1 0;background:linear-gradient(#c5c8ce,#a2a5ac 48%,#8c8f97 52%,#b5b8be);display:flex;align-items:center;justify-content:center}
  button.h{flex:18 1 0}ui-icon{width:18px;height:18px}button.cy{background:linear-gradient(#7c70ea,#6455d2)}button.st{background:#d0d1da}`,
  [['toStart','h'],['toEnd','h'],['rewind',''],['forward',''],['cycle','cy'],['stop','st'],['playT',''],['rec','']].map(([i, c]) => `<button class="${c}" aria-label="${i}"><ui-icon name="${i}"></ui-icon></button>`).join(''));
define('marker-keys', `:host{display:flex;height:26px;border:1px solid #333;padding:1px;gap:1px;background:#333}button{flex:18 1 0;background:#4b4c4f;display:flex;align-items:center;justify-content:center}
  button:last-child{flex:35 1 0}ui-icon{width:15px;height:16px}button:last-child ui-icon{width:24px}`,
  ['nUp','nDown','nLeft','nRight','nEnter'].map(i => `<button aria-label="${i}"><ui-icon name="${i}"></ui-icon></button>`).join(''));
define('tempo-box', `:host{display:grid;grid-template-rows:15px 14px 13px 15px;font-size:10px;line-height:13px;color:#bbb}
  div{display:flex;align-items:center;gap:5px;padding:0 1px}div:nth-of-type(2),div:nth-of-type(4){border-top:1px solid #222}
  button{width:33px;height:12px;background:#434a55;color:#c9d3da;font-size:9px;line-height:12px}.t{background:#48565d}
  em{font-style:normal;margin-left:auto;color:#777}.big{font-size:12px;color:#bbb}.off{color:#3e3e3e}ui-icon{width:18px;height:12px;background:#434a55;margin-left:auto}`,
  `<div><button>CLICK</button><span>OFF</span><ui-icon name="clickIc"></ui-icon></div><div><button class="t">TEMPO</button><span>FIXED</span><em>4/4</em></div><div><em class="big">76.000</em></div><div><button>SYNC</button><span>INT.</span><em class="off">离线</em></div>`);

define('transport-panel', `:host{display:flex;align-items:stretch;gap:4px;height:67px;width:901px;padding:3px 0 3px 1px;background:#46484b;border:1px solid #17181a;color:#aaa}
  :host>*{flex:none}.tab{width:13px;background:linear-gradient(90deg,#37393c,#55575b);border-right:1px solid #2a2b2d;display:flex;justify-content:center;padding-top:4px}
  .tab.r{border-right:0;border-left:1px solid #2a2b2d}
  small-arrow{--c:#999}.col{display:flex;flex-direction:column;gap:2px}
  .m1{width:26px;padding:2px 10px 2px 2px}.m1 i{display:block;height:4px;width:12px;background:#d9434d}.m1 i+i{background:#30a368;height:5px}
  .m1 .s{display:flex;flex-direction:column;justify-content:space-between;height:54px}
  .mk .in2{display:flex;justify-content:space-between;height:27px;padding:7px 2px 0 55px}.mk .in2 small-arrow:first-child{margin-top:13px}
  .lv{width:40px;padding:0 3px 1px}.lv .in{display:grid;grid-template-columns:1fr 1fr;gap:6px;height:100%;align-items:end}
  .in>span{border-top:1px solid #4c4c4c;height:41px;display:flex;align-items:flex-end}.in level-meter{width:100%}
  .fd{width:10px}`,
  `<div class="tab"><small-arrow up></small-arrow></div>
  <black-box class="m1"><div class="s"><i></i><i></i></div></black-box>
  <black-box style="width:132px"><mode-list></mode-list></black-box>
  <black-box style="width:115px"><locator-box></locator-box></black-box>
  <div class="col" style="width:266px"><time-display></time-display><transport-keys></transport-keys></div>
  <div class="col" style="width:114px"><black-box class="mk" style="height:31px"><div class="in2"><small-arrow></small-arrow><small-arrow></small-arrow></div></black-box><marker-keys></marker-keys></div>
  <black-box style="width:112px"><tempo-box></tempo-box></black-box>
  <black-box style="width:15px"></black-box>
  <black-box class="lv"><div class="in"><span><level-meter levels="20 20"></level-meter></span><span><level-meter levels="1 1"></level-meter></span></div></black-box>
  <svg class="fd" viewBox="0 0 10 60"><path d="M5 3v54" stroke="#777" stroke-width="2"/><path d="M1 3h2M1 55h2" stroke="#999"/><circle cx="5" cy="25" r="3" fill="#fff"/></svg>
  <div class="tab r"><small-arrow up></small-arrow></div>`);

/* ---------- whole editor ---------- */
define('key-editor', `:host{display:flex;flex-direction:column;height:100vh;margin:0 24px;position:relative;overflow:hidden;background:#24262c}
  main{flex:1;display:flex;min-height:0}
  .ed{flex:1;min-width:0;display:grid;grid-template-columns:48px 1fr 15px;grid-template-rows:25px 1fr 3px 95px 15px}
  .dark{background:#1b1d24}.corner{background:#22252b;padding-top:6px}.corner button{width:13px;height:13px;background:#77787e;display:flex;align-items:center;justify-content:center}
  .split{background:#9c9ea1;grid-column:1/3}.grey{background:#a7a7ac}
  .vl{background:#a7a7ac;font-size:10px;line-height:13px;color:#222;padding:0 2px 0 1px}.vl div+div{text-align:right}
  .vs{display:flex;flex-direction:column;position:relative;background:#a3a3a6}.vs scroll-bar{flex:1}.vs zoom-slider{height:76px;flex:none}
  .pill{position:absolute;left:4px;top:572px;width:11px;height:49px;border-radius:6px;background:#4b4d4f;display:flex;justify-content:center;align-items:flex-end;padding-bottom:5px}
  .pill i{width:3px;height:26px;background:linear-gradient(#e08a2c,#c9c53c 50%,#36c431)}
  .bl{display:flex;justify-content:space-between;background:#a7a7ac;padding:0 3px 0 1px}.bl ui-icon{width:15px;height:15px}
  .hs{display:flex;gap:3px;background:#a3a3a6}.hs scroll-bar{flex:1}.hs zoom-slider{width:75px}
  transport-panel{position:absolute;left:841px;top:20px}
  @media (max-width:1800px){transport-panel{left:auto;right:0}}`,
  `<menu-bar></menu-bar><tool-bar></tool-bar>
  <main><inspector-panel></inspector-panel>
  <div class="ed"><div class="dark"></div><time-ruler></time-ruler><div class="corner"><button aria-label="标尺"><small-arrow></small-arrow></button></div>
  <piano-keys></piano-keys><note-grid></note-grid><div class="vs"><scroll-bar vertical parts="298 215 194"></scroll-bar><zoom-slider vertical></zoom-slider><div class="pill"><i></i></div></div>
  <div class="split"></div><div class="grey"></div>
  <div class="vl"><div>力度</div><div>70</div></div><velocity-lane></velocity-lane><scroll-bar vertical></scroll-bar>
  <div class="bl"><ui-icon name="plus"></ui-icon><ui-icon name="page"></ui-icon></div><div class="hs"><scroll-bar parts="18 155 1353"></scroll-bar><zoom-slider></zoom-slider></div><div class="grey"></div>
  </div></main><transport-panel></transport-panel>`);
</script>
</body>
</html>
